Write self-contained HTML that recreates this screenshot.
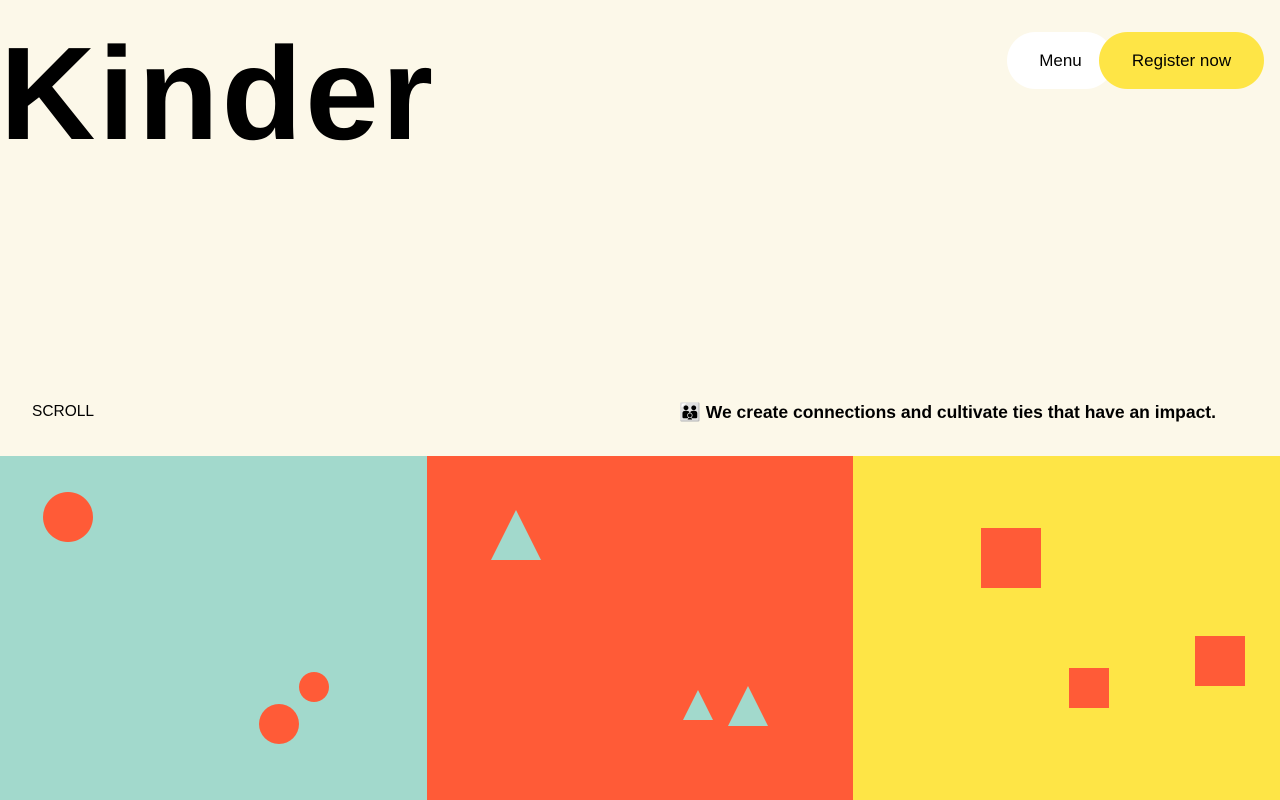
<!DOCTYPE html>
<html><head><meta charset="utf-8"><style>
html,body{margin:0;padding:0}
body{width:1280px;height:800px;overflow:hidden;background:#fcf8e9;font-family:"Liberation Sans",sans-serif;position:relative;color:#000}
.logo{position:absolute;left:0;top:19px;font-size:132px;font-weight:700;letter-spacing:3px;line-height:150px}
.btn{position:absolute;top:32px;height:57px;border-radius:29px;font-size:17px;line-height:57px;text-align:center}
.menu{left:1007px;width:107px;background:#fff}
.reg{left:1099px;width:165px;background:#fee546}
.scroll{position:absolute;left:32px;top:403px;font-size:15.5px;font-weight:500}
.tag{position:absolute;right:64px;top:402px;font-size:17.5px;font-weight:600;white-space:nowrap}
.panel{position:absolute;top:456px;height:344px}
</style></head><body>
<div class="logo">Kinder</div>
<div class="btn menu">Menu</div>
<div class="btn reg">Register now</div>
<div class="scroll">SCROLL</div>
<div class="tag">👪 We create connections and cultivate ties that have an impact.</div>
<div class="panel" style="left:0;width:427px;background:#a2d9cc"></div>
<div class="panel" style="left:427px;width:426px;background:#ff5b37"></div>
<div class="panel" style="left:853px;width:427px;background:#fee546"></div>
<svg width="1280" height="800" style="position:absolute;left:0;top:0">
<circle cx="68" cy="517" r="25" fill="#ff5b37"/>
<circle cx="314" cy="687" r="15" fill="#ff5b37"/>
<circle cx="279" cy="724" r="20" fill="#ff5b37"/>
<polygon points="516,510 541,560 491,560" fill="#a2d9cc"/>
<polygon points="698,690 713,720 683,720" fill="#a2d9cc"/>
<polygon points="748,686 768,726 728,726" fill="#a2d9cc"/>
<rect x="981" y="528" width="60" height="60" fill="#ff5b37"/>
<rect x="1069" y="668" width="40" height="40" fill="#ff5b37"/>
<rect x="1195" y="636" width="50" height="50" fill="#ff5b37"/>
</svg>
</body></html>
